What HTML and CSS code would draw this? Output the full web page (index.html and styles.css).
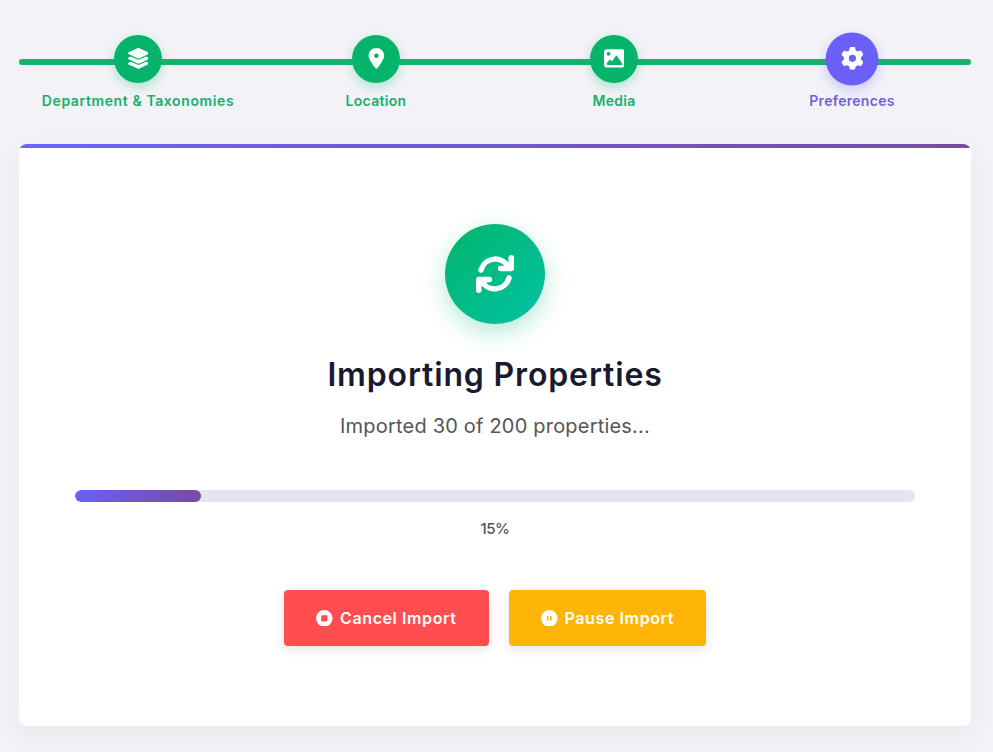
FILE: index.html
```html
<!DOCTYPE html>
<html lang="en">
<head>
  <meta charset="UTF-8" />
  <meta name="viewport" content="width=device-width, initial-scale=1" />
  <title>Importing Properties</title>
  <link rel="stylesheet" href="styles.css">
</head>
<body>

  <div class="wizard">

    <div class="steps">
      <div class="step completed">
        <div class="step-icon">
          <svg viewBox="32 0 512 512"><path d="M264.5 5.2c14.9-6.9 32.1-6.9 47 0l218.6 101c8.5 3.9 13.9 12.4 13.9 21.8s-5.4 17.9-13.9 21.8l-218.6 101c-14.9 6.9-32.1 6.9-47 0L45.9 149.8C37.4 145.8 32 137.3 32 128s5.4-17.9 13.9-21.8L264.5 5.2zM476.9 209.6l53.2 24.6c8.5 3.9 13.9 12.4 13.9 21.8s-5.4 17.9-13.9 21.8l-218.6 101c-14.9 6.9-32.1 6.9-47 0L45.9 277.8C37.4 273.8 32 265.3 32 256s5.4-17.9 13.9-21.8l53.2-24.6 152 70.2c23.4 10.8 50.4 10.8 73.8 0l152-70.2zm-152 198.2l152-70.2 53.2 24.6c8.5 3.9 13.9 12.4 13.9 21.8s-5.4 17.9-13.9 21.8l-218.6 101c-14.9 6.9-32.1 6.9-47 0L45.9 405.8C37.4 401.8 32 393.3 32 384s5.4-17.9 13.9-21.8l53.2-24.6 152 70.2c23.4 10.8 50.4 10.8 73.8 0z"/></svg>
        </div>
        <div class="step-label label-wide">Department &amp; Taxonomies</div>
      </div>
      <div class="step completed">
        <div class="step-icon">
          <svg viewBox="-64 0 512 512"><path fill-rule="evenodd" d="M215.7 499.2C267 435 384 279.4 384 192C384 86 298 0 192 0S0 86 0 192c0 87.4 117 243 168.3 307.2c12.3 15.3 35.1 15.3 47.4 0zM192 136a56 56 0 1 1 0 112 56 56 0 1 1 0-112z"/></svg>
        </div>
        <div class="step-label">Location</div>
      </div>
      <div class="step completed">
        <div class="step-icon">
          <svg viewBox="0 0 512 512"><path fill-rule="evenodd" d="M0 96C0 60.7 28.7 32 64 32H448c35.3 0 64 28.7 64 64V416c0 35.3-28.7 64-64 64H64c-35.3 0-64-28.7-64-64V96zM323.8 202.5c-4.5-6.6-11.9-10.5-19.8-10.5s-15.4 3.9-19.8 10.5l-87 127.6L170.7 297c-4.6-5.7-11.5-9-18.7-9s-14.2 3.3-18.7 9l-64 80c-5.8 7.2-6.9 17.1-2.9 25.4s12.4 13.6 21.6 13.6h96 32H424c8.9 0 17.1-4.9 21.2-12.8s3.6-17.4-1.4-24.7l-120-176zM112 192a48 48 0 1 0 0-96 48 48 0 1 0 0 96z"/></svg>
        </div>
        <div class="step-label">Media</div>
      </div>
      <div class="step active">
        <div class="step-icon">
          <svg viewBox="0 0 512 512"><path fill-rule="evenodd" d="M495.9 166.6c3.2 8.7 .5 18.4-6.4 24.6l-43.3 39.4c1.1 8.3 1.7 16.8 1.7 25.4s-.6 17.1-1.7 25.4l43.3 39.4c6.9 6.2 9.6 15.9 6.4 24.6c-4.4 11.9-9.7 23.3-15.8 34.3l-4.7 8.1c-6.6 11-14 21.4-22.1 31.2c-5.9 7.2-15.7 9.6-24.5 6.8l-55.7-17.7c-13.4 10.3-28.2 18.9-44 25.4l-12.5 57.1c-2 9.1-9 16.3-18.2 17.8c-13.8 2.3-28 3.5-42.5 3.5s-28.7-1.2-42.5-3.5c-9.2-1.5-16.2-8.7-18.2-17.8l-12.5-57.1c-15.8-6.5-30.6-15.1-44-25.4L83.1 425.9c-8.8 2.8-18.6 .3-24.5-6.8c-8.1-9.8-15.5-20.2-22.1-31.2l-4.7-8.1c-6.1-11-11.4-22.4-15.8-34.3c-3.2-8.7-.5-18.4 6.4-24.6l43.3-39.4C64.6 273.1 64 264.6 64 256s.6-17.1 1.7-25.4L22.4 191.2c-6.9-6.2-9.6-15.9-6.4-24.6c4.4-11.9 9.7-23.3 15.8-34.3l4.7-8.1c6.6-11 14-21.4 22.1-31.2c5.9-7.2 15.7-9.6 24.5-6.8l55.7 17.7c13.4-10.3 28.2-18.9 44-25.4l12.5-57.1c2-9.1 9-16.3 18.2-17.8C227.3 1.2 241.5 0 256 0s28.7 1.2 42.5 3.5c9.2 1.5 16.2 8.7 18.2 17.8l12.5 57.1c15.8 6.5 30.6 15.1 44 25.4l55.7-17.7c8.8-2.8 18.6-.3 24.5 6.8c8.1 9.8 15.5 20.2 22.1 31.2l4.7 8.1c6.1 11 11.4 22.4 15.8 34.3zM256 336a80 80 0 1 0 0-160 80 80 0 1 0 0 160z"/></svg>
        </div>
        <div class="step-label">Preferences</div>
      </div>
    </div>

    <div class="card">
      <div class="import-icon">
        <svg viewBox="0 0 38 38">
          <path d="M5 15A14.9 15.4 0 0 1 32.6 12.6M35.2 2.8V13.6H24.6"/>
          <path d="M33 23A14.9 15.4 0 0 1 5.4 25.4M2.8 35.2V24.4H13.4"/>
        </svg>
      </div>
      <h1 class="import-title">Importing Properties</h1>
      <p class="import-status">Imported 30 of 200 properties...</p>

      <div class="progress">
        <div class="progress-bar" style="width: 15%"></div>
      </div>
      <div class="progress-text">15%</div>

      <div class="actions">
        <button class="btn cancel-btn">
          <svg viewBox="0 0 512 512"><path fill-rule="evenodd" d="M256 0a256 256 0 1 1 0 512A256 256 0 1 1 256 0zM192 160c-17.7 0-32 14.3-32 32V320c0 17.7 14.3 32 32 32H320c17.7 0 32-14.3 32-32V192c0-17.7-14.3-32-32-32H192z"/></svg>
          <span>Cancel Import</span>
        </button>
        <button class="btn pause-btn">
          <svg viewBox="0 0 512 512"><path fill-rule="evenodd" d="M256 0a256 256 0 1 1 0 512A256 256 0 1 1 256 0zM232 200c0-13.3-10.7-24-24-24s-24 10.7-24 24V312c0 13.3 10.7 24 24 24s24-10.7 24-24V200zM328 200c0-13.3-10.7-24-24-24s-24 10.7-24 24V312c0 13.3 10.7 24 24 24s24-10.7 24-24V200z"/></svg>
          <span>Pause Import</span>
        </button>
      </div>
    </div>

  </div>

</body>
</html>
```
FILE: styles.css
```css
* {
  box-sizing: border-box;
}

body {
  margin: 0;
  background: #f3f3f7;
  font-family: Inter, sans-serif;
}

.wizard {
  padding: 35px 22px 26px 19px;
}

/* steps */
.steps {
  display: grid;
  grid-template-columns: repeat(4, 1fr);
  height: 109px;
  position: relative;
}
.steps::before {
  content: "";
  position: absolute;
  top: 24px;
  left: 0;
  right: 0;
  height: 6px;
  border-radius: 3px;
  background: #14b36d;
}

.step {
  display: flex;
  flex-direction: column;
  align-items: center;
  position: relative;
}
.step-icon {
  display: flex;
  align-items: center;
  justify-content: center;
  width: 48px;
  height: 48px;
  padding-bottom: 1px;
  border-radius: 50%;
  background: #06b36b;
  box-shadow: 0 4px 12px rgba(0, 184, 108, 0.3);
}
.step-icon svg {
  width: 20.8px;
  height: 20.8px;
  fill: #fff;
}
.step-label {
  margin-top: 8px;
  font-size: 14px;
  line-height: 20px;
  font-weight: 600;
  letter-spacing: 0.3px;
  color: #20ad6c;
  white-space: nowrap;
}
.label-wide {
  letter-spacing: 0.6px;
}
.step.active .step-icon {
  background: #6c5ff8;
  transform: scale(1.1);
  box-shadow: 0 4px 12px rgba(108, 95, 255, 0.3);
}
.step.active .step-label {
  color: #7460da;
}

/* card */
.card {
  display: flex;
  flex-direction: column;
  align-items: center;
  position: relative;
  height: 582px;
  padding: 80px 56px;
  background: #fff;
  border-radius: 8px;
  overflow: hidden;
  box-shadow: 0 8px 30px rgba(0, 0, 0, 0.05);
}
.card::before {
  content: "";
  position: absolute;
  top: 0;
  left: 0;
  right: 0;
  height: 4px;
  background: linear-gradient(90deg, #6c63ff, #764ba2);
}

.import-icon {
  display: flex;
  align-items: center;
  justify-content: center;
  width: 100px;
  height: 100px;
  border-radius: 50%;
  background: linear-gradient(135deg, #03b56a, #02c2a6);
  box-shadow: 0 8px 24px rgba(0, 184, 120, 0.3);
}
.import-icon svg {
  width: 38px;
  height: 38px;
  fill: none;
  stroke: #fff;
  stroke-width: 5.5;
  stroke-linecap: round;
  stroke-linejoin: round;
}

.import-title {
  margin: 27px 0 0;
  font-size: 32px;
  line-height: 48px;
  font-weight: 600;
  letter-spacing: 0.85px;
  color: #1a1a2e;
}
.import-status {
  margin: 12px 0 0;
  font-size: 20px;
  line-height: 30px;
  letter-spacing: 0.2px;
  color: #555;
}

.progress {
  width: 100%;
  height: 12px;
  margin-top: 49px;
  border-radius: 6px;
  background: #e5e4ef;
  overflow: hidden;
}
.progress-bar {
  height: 100%;
  border-radius: 6px;
  background: linear-gradient(90deg, #6c5ff8, #764ba2);
}
.progress-text {
  margin-top: 15px;
  font-size: 15px;
  line-height: 24px;
  font-weight: 500;
  letter-spacing: -0.4px;
  color: #555;
}

.actions {
  display: flex;
  gap: 20px;
  margin-top: 49px;
}
.btn {
  display: flex;
  align-items: center;
  justify-content: center;
  gap: 7px;
  height: 56px;
  border: none;
  border-radius: 4px;
  font-family: inherit;
  font-size: 16px;
  font-weight: 600;
  letter-spacing: 0.6px;
  color: #fff;
  cursor: pointer;
  box-shadow: 0 4px 12px rgba(0, 0, 0, 0.1);
}
.btn svg {
  width: 16.6px;
  height: 16.6px;
  fill: #fff;
}
.cancel-btn {
  width: 205px;
  background: #ff4d50;
}
.pause-btn {
  width: 197px;
  background: #ffb508;
}
```
